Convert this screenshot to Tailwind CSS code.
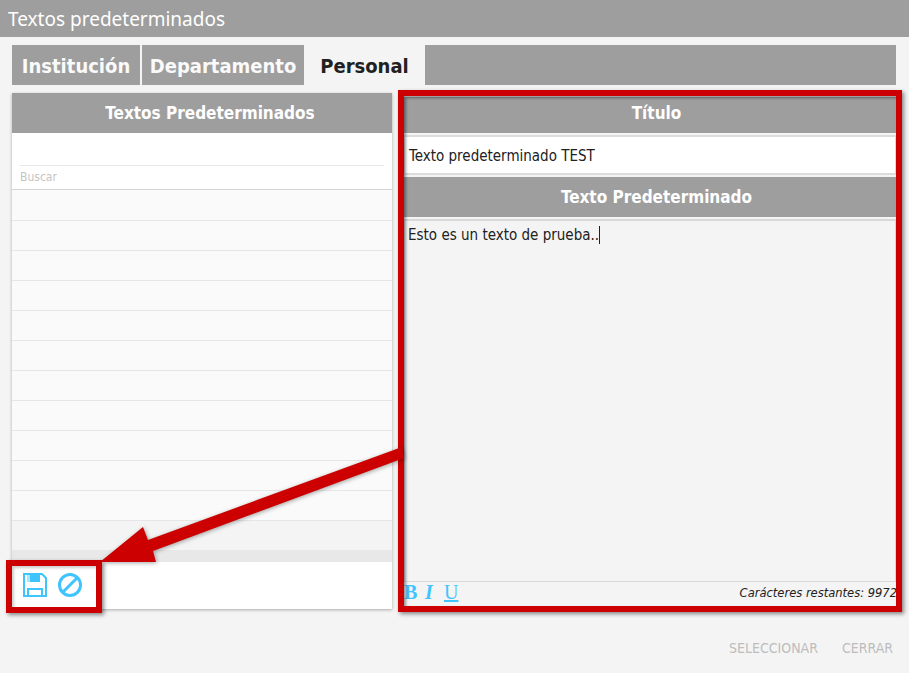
<!doctype html>
<html><head><meta charset="utf-8"><script src="https://cdn.jsdelivr.net/npm/@tailwindcss/browser@4"></script></head>
<body class="m-0">
<div class="relative w-[909px] h-[673px] overflow-hidden bg-[#f4f4f4] font-['DejaVu_Sans_Condensed','DejaVu_Sans',sans-serif] text-[#212121]">
  <div class="h-[37px] bg-[#9e9e9e] text-white text-[19px] leading-[39px] pl-[8px] font-['Noto_Sans',sans-serif]">Textos predeterminados</div>
  <div class="flex h-[40px] mt-[8px] ml-[12px] w-[884px] text-[20px] font-bold leading-[42px]">
    <div class="w-[128px] bg-[#9e9e9e] text-[#fafafa] text-center">Institución</div>
    <div class="w-[162px] ml-[2px] bg-[#9e9e9e] text-[#fafafa] text-center">Departamento</div>
    <div class="w-[121px] text-center">Personal</div>
    <div class="flex-1 bg-[#9e9e9e]"></div>
  </div>
  <div class="flex mt-[8px] ml-[12px] w-[884px] h-[516px] justify-between">
    <div class="w-[380px] flex flex-col bg-white shadow-[0_1px_3px_rgba(0,0,0,0.3)]">
      <div class="h-[40px] bg-[#9e9e9e] text-white text-center font-bold text-[17px] leading-[41px] pl-[16px]">Textos Predeterminados</div>
      <div class="h-[57px] px-[8px] border-b border-[#d4d4d4] flex flex-col">
        <div class="h-[33px] border-b border-[#e8e8e8] shrink-0"></div>
        <div class="text-[12px] leading-[22px] text-[#c4c4c4]">Buscar</div>
      </div>
      <div class="flex flex-col bg-[#fafafa] h-[331px] pt-px divide-y divide-[#e6e6e6] *:h-[30px] *:shrink-0 border-b border-[#e6e6e6]">
        <div></div><div></div><div></div><div></div><div></div><div></div><div></div><div></div><div></div><div></div><div></div>
      </div>
      <div class="h-[29px] bg-[#f4f4f4]"></div>
      <div class="h-[12px] bg-[#e8e8e8]"></div>
      <div class="flex-1 flex items-center gap-[9px] pl-[10px] pb-[2px]">
        <svg class="w-[26px] h-[26px]" viewBox="0 0 26 26" fill="none" stroke="#40c4ff" stroke-width="2"><path d="M2 2H20L24 6V24H2Z"/><path d="M6 17H20V24H6Z"/><path d="M8 2H18V10H8Z" fill="#40c4ff" stroke="none"/><path d="M5 3H8V10H5Z" fill="#a6e7ff" stroke="none"/></svg>
        <svg class="w-[26px] h-[26px]" viewBox="0 0 26 26" fill="none" stroke="#40c4ff" stroke-width="3"><circle cx="13" cy="13" r="10.5"/><path d="M6 20L20 6"/></svg>
      </div>
    </div>
    <div class="w-[492px] flex flex-col mt-[4px]">
      <div class="h-[36px] bg-[#9e9e9e] text-white text-center font-bold text-[17px] leading-[33px] pl-[13px] shrink-0">Título</div>
      <div class="h-[40px] mt-[2px] bg-white border-y-2 border-x border-[#dcdcdc] text-[15px] leading-[39px] pl-[4px] shrink-0">Texto predeterminado TEST</div>
      <div class="h-[40px] mt-[2px] bg-[#9e9e9e] text-white text-center font-bold text-[17px] leading-[41px] pl-[13px] shrink-0">Texto Predeterminado</div>
      <div class="h-[363px] mt-[2px] border-t-2 border-x border-b border-[#d8d8d8] text-[15px] leading-[28px] pl-[3px] shrink-0">Esto es un texto de prueba..<span class="inline-block w-px h-[18px] bg-[#212121] align-[-4px]"></span></div>
      <div class="flex-1 flex items-center justify-between relative">
        <div class="flex items-center font-['Liberation_Serif',serif] text-[#40c4ff] text-[20px] leading-[22px] -mt-[7px]">
          <span class="font-bold w-[21px]">B</span><span class="italic font-bold w-[19px]">I</span><span class="underline">U</span>
        </div>
        <div class="italic text-[12.8px] whitespace-nowrap -mr-[1px] -mt-[5px]">Carácteres restantes: 9972</div>
      </div>
    </div>
  </div>
  <div class="flex justify-end gap-[24px] pr-[16px] mt-[30px] text-[14px] leading-[18px] text-[#bdbdbd]">
    <span>SELECCIONAR</span><span>CERRAR</span>
  </div>
  <!-- annotation overlay -->
  <div class="absolute left-[398px] top-[90px] w-[504px] h-[522px] border-[6px] border-[#cc0000] shadow-[2px_2px_4px_rgba(0,0,0,0.45),inset_2px_2px_3px_rgba(0,0,0,0.4)]"></div>
  <div class="absolute left-[6px] top-[560px] w-[96px] h-[53px] border-[6px] border-[#cc0000] shadow-[2px_2px_4px_rgba(0,0,0,0.45),inset_2px_2px_3px_rgba(0,0,0,0.2)]"></div>
  <svg class="absolute left-0 top-0 drop-shadow-[1px_1px_2px_rgba(0,0,0,0.35)]" width="909" height="673" viewBox="0 0 909 673">
    <path d="M402 447L404 458L153 551L156 562L100 562L143 527L148 540Z" fill="#cc0000"/>
  </svg>
</div>
</body></html>
